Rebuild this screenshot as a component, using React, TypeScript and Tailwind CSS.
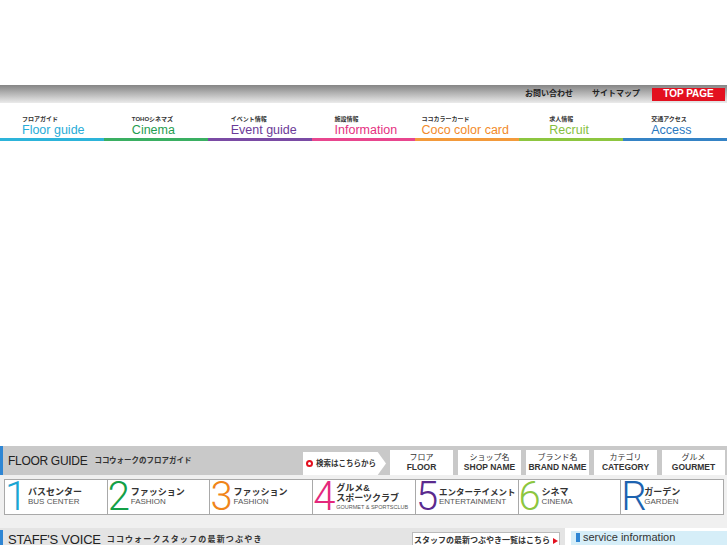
import React from 'react';

const navItems = [
  { jp: 'フロアガイド', en: 'Floor guide', text: 'text-[#27acd8]', bar: 'bg-[#2db4da]', pl: 'pl-[22px]' },
  { jp: 'TOHOシネマズ', en: 'Cinema', text: 'text-[#1f9d4f]', bar: 'bg-[#3aaf62]', pl: 'pl-[28px]' },
  { jp: 'イベント情報', en: 'Event guide', text: 'text-[#6b3a98]', bar: 'bg-[#7a4ba4]', pl: 'pl-[23px]' },
  { jp: '施設情報', en: 'Information', text: 'text-[#e5307f]', bar: 'bg-[#e8468e]', pl: 'pl-[23px]' },
  { jp: 'ココカラーカード', en: 'Coco color card', text: 'text-[#f28a2a]', bar: 'bg-[#f39a3b]', pl: 'pl-[6px]' },
  { jp: '求人情報', en: 'Recruit', text: 'text-[#86bf41]', bar: 'bg-[#8dc640]', pl: 'pl-[30px]' },
  { jp: '交通アクセス', en: 'Access', text: 'text-[#2a78c0]', bar: 'bg-[#3583c5]', pl: 'pl-[28px]' },
];

const tabs = [
  { jp: 'フロア', en: 'FLOOR' },
  { jp: 'ショップ名', en: 'SHOP NAME' },
  { jp: 'ブランド名', en: 'BRAND NAME' },
  { jp: 'カテゴリ', en: 'CATEGORY' },
  { jp: 'グルメ', en: 'GOURMET' },
];

const floors = [
  { n: '1', jp: ['バスセンター'], en: 'BUS CENTER', color: 'text-[#1aa5d3]' },
  { n: '2', jp: ['ファッション'], en: 'FASHION', color: 'text-[#13a047]' },
  { n: '3', jp: ['ファッション'], en: 'FASHION', color: 'text-[#f08519]' },
  { n: '4', jp: ['グルメ&', 'スポーツクラブ'], en: 'GOURMET & SPORTSCLUB', color: 'text-[#e4287c]' },
  { n: '5', jp: ['エンターテイメント'], en: 'ENTERTAINMENT', color: 'text-[#5a2a8e]' },
  { n: '6', jp: ['シネマ'], en: 'CINEMA', color: 'text-[#8cc63f]' },
  { n: 'R', jp: ['ガーデン'], en: 'GARDEN', color: 'text-[#1d63b0]' },
];

export default function App() {
  return (
    <div className="w-[727px] h-[545px] overflow-hidden bg-white font-['Liberation_Sans','Noto_Sans_CJK_JP',sans-serif] text-[#333]">
      <div className="h-[85px]" />
      {/* gradient utility bar */}
      <div className="h-[18px] bg-linear-to-b from-[#858585] via-[#b8b8b8] to-[#ebebeb] flex items-center justify-end pr-[2px]">
        <span className="text-[8px] font-bold text-[#222] leading-none">お問い合わせ</span>
        <span className="ml-[19px] text-[8px] font-bold text-[#222] leading-none">サイトマップ</span>
        <div className="ml-[12px] w-[73px] h-[13px] bg-[#e3101f] text-white text-[10px] font-bold flex items-center justify-center leading-none">
          TOP PAGE
        </div>
      </div>
      {/* nav */}
      <div className="h-[38px] flex">
        {navItems.map((it) => (
          <div key={it.en} className="flex-1 flex flex-col">
            <div className={`flex-1 pt-[12px] ${it.pl}`}>
              <div className="text-[6px] font-bold leading-[8px] text-[#333] whitespace-nowrap">{it.jp}</div>
              <div className={`text-[12.5px] leading-[14px] whitespace-nowrap ${it.text}`}>{it.en}</div>
            </div>
            <div className={`h-[3px] ${it.bar}`} />
          </div>
        ))}
      </div>
      <div className="h-[305px]" />
      {/* floor guide bar */}
      <div className="h-[29px] bg-[#c9c9c9] flex">
        <div className="w-[3px] bg-[#2f86d4]" />
        <div className="flex items-center pl-[5px]">
          <span className="text-[12px] tracking-[-0.3px] text-[#222] leading-none">FLOOR GUIDE</span>
          <span className="ml-[7px] text-[7.5px] font-bold text-[#333] leading-none">ココウォークのフロアガイド</span>
        </div>
        <div className="ml-auto pr-[2px] flex items-end">
          <div className="w-[83px] h-[23px] bg-white [clip-path:polygon(0_0,90%_0,100%_50%,90%_100%,0_100%)] flex items-center pl-[3px]">
            <span className="w-[7px] h-[7px] rounded-full border-[2px] border-[#e3101f]" />
            <span className="ml-[3px] text-[7.5px] font-bold text-[#333] leading-none whitespace-nowrap">検索はこちらから</span>
          </div>
          <div className="ml-[4px] flex gap-[5px]">
            {tabs.map((t) => (
              <div key={t.en} className="w-[63px] h-[25px] bg-white flex flex-col items-center justify-center">
                <span className="text-[8px] leading-[9px] text-[#333]">{t.jp}</span>
                <span className="text-[8.5px] leading-[10px] font-bold text-[#333] whitespace-nowrap">{t.en}</span>
              </div>
            ))}
          </div>
        </div>
      </div>
      {/* floor buttons */}
      <div className="h-[53px] bg-[#f0f0f0] pt-[4px] pl-[4px] pr-[3px]">
        <div className="h-[36px] flex border border-[#a9a9a9] bg-white divide-x divide-[#a9a9a9]">
          {floors.map((f) => (
            <div key={f.n + f.en} className="flex-1 flex items-center min-w-0">
              <div className={`w-[22px] shrink-0 text-center font-['Roboto',sans-serif] font-light text-[40px] leading-none ${f.color}`}>
                {f.n}
              </div>
              <div className="flex flex-col ml-[1px] whitespace-nowrap">
                {f.jp.map((j) => (
                  <span key={j} className={`${f.n === '5' ? 'text-[8.5px]' : 'text-[9px]'} font-bold leading-[10px] text-[#333]`}>{j}</span>
                ))}
                <span className={`${f.n === '4' ? 'text-[5.5px] leading-[8px]' : 'text-[8px] leading-[10px]'} text-[#555]`}>{f.en}</span>
              </div>
            </div>
          ))}
        </div>
      </div>
      {/* staff voice row */}
      <div className="flex">
        <div className="w-[565px] h-[26px] bg-[#e4e4e4] flex">
          <div className="w-[3px] mt-[2px] bg-[#2f86d4]" />
          <div className="flex items-start pl-[5px] flex-1">
            <span className="mt-[5px] text-[13px] tracking-[-0.2px] text-[#222] leading-[13px]">STAFF'S VOICE</span>
            <span className="mt-[8px] ml-[6px] text-[8px] tracking-[1.2px] font-bold text-[#333] leading-[8px]">ココウォークスタッフの最新つぶやき</span>
            <div className="ml-auto mr-[5px] mt-[4px] h-[18px] w-[148px] bg-white border border-[#bbb] flex items-center justify-center">
              <span className="text-[8px] font-bold text-[#333] leading-none whitespace-nowrap">スタッフの最新つぶやき一覧はこちら</span>
              <span className="ml-[3px] w-0 h-0 border-y-[3px] border-y-transparent border-l-[5px] border-l-[#e3101f]" />
            </div>
          </div>
        </div>
        <div className="ml-[6px] flex-1 mt-[3px] h-[23px] bg-[#d6eef8] flex items-start pt-[1px] pl-[5px]">
          <span className="w-[4px] h-[9px] bg-[#2f86d4] mt-[1px]" />
          <span className="ml-[3px] text-[11px] text-[#333] leading-[11px]">service information</span>
        </div>
      </div>
    </div>
  );
}
